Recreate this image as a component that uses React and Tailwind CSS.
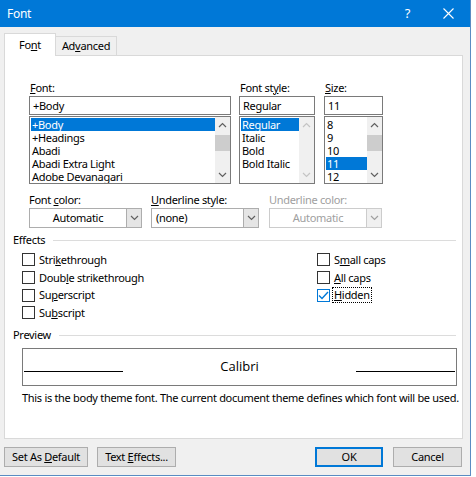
import React from 'react';

// Word "Font" dialog, Windows 10 look

const Chevron = ({ dir = 'down', color = '#606060' }) => (
  <svg width="9" height="6" viewBox="0 0 9 6">
    <polyline
      points={dir === 'down' ? '1,1 4.5,4.5 8,1' : '1,5 4.5,1.5 8,5'}
      fill="none"
      stroke={color}
      strokeWidth="1.2"
    />
  </svg>
);

function ListBox({ items, selected, width, thumb, disabled }) {
  return (
    <div
      className="mt-[1px] h-[68px] border border-[#7a7a7a] bg-white flex"
      style={{ width }}
    >
      <div className="flex-1 pt-[1px] pl-[1px] overflow-hidden">
        {items.map((it) => (
          <div
            key={it}
            className={`h-[13px] leading-[13px] pl-[1px] whitespace-nowrap ${
              it === selected ? 'bg-[#0078d7] text-white' : 'text-black'
            }`}
          >
            {it}
          </div>
        ))}
      </div>
      <div className="w-[15px] bg-[#f0f0f0] flex flex-col items-center justify-between py-[5px]">
        <Chevron dir="up" color={disabled ? '#c4c4c4' : '#606060'} />
        {thumb ? <div className="w-[15px] h-[16px] bg-[#cdcdcd] -mt-[14px]" /> : <div />}
        <Chevron dir="down" color={disabled ? '#c4c4c4' : '#606060'} />
      </div>
    </div>
  );
}

function Field({ children, width }) {
  return (
    <div
      className="h-[19px] border border-[#7a7a7a] bg-white pl-[3px] leading-[17px]"
      style={{ width }}
    >
      {children}
    </div>
  );
}

function Combo({ value, width, center, disabled }) {
  return (
    <div
      className={`h-[20px] border flex ${
        disabled ? 'border-[#cccccc] text-[#a0a0a0]' : 'border-[#adadad] text-black'
      } bg-white`}
      style={{ width }}
    >
      <div className={`flex-1 leading-[18px] ${center ? 'text-center' : 'pl-[4px]'}`}>{value}</div>
      <div
        className={`w-[15px] flex items-center justify-center border-l ${
          disabled ? 'border-[#cccccc] bg-[#f0f0f0]' : 'border-[#adadad] bg-[#e5e5e5]'
        }`}
      >
        <Chevron color={disabled ? '#a0a0a0' : '#606060'} />
      </div>
    </div>
  );
}

function Check({ label, checked }) {
  return (
    <div className="h-[17.7px] flex items-center">
      <div
        className={`w-[13px] h-[13px] border bg-white flex items-center justify-center ${
          checked ? 'border-[#0078d7]' : 'border-[#333333]'
        }`}
      >
        {checked && (
          <svg width="11" height="9" viewBox="0 0 11 9">
            <polyline points="1,4.5 4,7.5 10,1" fill="none" stroke="#0078d7" strokeWidth="1.4" />
          </svg>
        )}
      </div>
      <span
        className={`ml-[3px] leading-[14px] px-[1px] ${
          checked ? 'outline outline-1 outline-dotted outline-black' : ''
        }`}
      >
        {label}
      </span>
    </div>
  );
}

function GroupLabel({ children }) {
  return (
    <div className="flex items-center pl-[8px] pr-[6px] h-[15px]">
      <span className="text-black">{children}</span>
      <div className="flex-1 h-px bg-[#dcdcdc] ml-[8px]" />
    </div>
  );
}

function Button({ children, width, primary }) {
  return (
    <div
      className={`h-[20px] flex items-center justify-center bg-[#e1e1e1] ${
        primary ? 'border-2 border-[#0078d7]' : 'border border-[#adadad]'
      }`}
      style={{ width }}
    >
      <span>{children}</span>
    </div>
  );
}

export default function App() {
  return (
    <div className="w-[476px] h-[477px] bg-white font-['Noto_Sans',sans-serif] text-[11px] tracking-[-0.3px] text-black">
      <div className="w-[471px] h-[476px] bg-[#f0f0f0] border-r border-b border-[#5a8cc2] flex flex-col">
        {/* Title bar */}
        <div className="h-[27px] bg-[#0078d7] flex items-center text-white shrink-0">
          <span className="pl-[7px] text-[12px]">Font</span>
          <span className="ml-auto mr-[33px] text-[13px]">?</span>
          <svg width="11" height="11" viewBox="0 0 11 11" className="mr-[16px]">
            <path d="M0.5 0.5 L10.5 10.5 M10.5 0.5 L0.5 10.5" stroke="white" strokeWidth="1.1" />
          </svg>
        </div>

        {/* Tabs */}
        <div className="flex items-end pl-[4px] pt-[6px] h-[28px] shrink-0">
          <div className="w-[52px] h-[23px] bg-white border border-b-0 border-[#d9d9d9] flex items-center justify-center relative z-10 -mb-px">
            <span>
              Fo<u>n</u>t
            </span>
          </div>
          <div className="w-[61px] h-[19px] bg-[#f0f0f0] border border-l-0 border-b-0 border-[#d9d9d9] flex items-center justify-center">
            <span>
              Ad<u>v</u>anced
            </span>
          </div>
        </div>

        {/* Panel */}
        <div className="ml-[4px] w-[459px] h-[384px] bg-white border border-[#d9d9d9] shrink-0 flex flex-col">
          {/* Font / style / size */}
          <div className="flex pl-[24px] pt-[24px]">
            <div className="flex flex-col">
              <div className="h-[16px] leading-[15px] pl-[1px]">
                <u>F</u>ont:
              </div>
              <Field width={202}>+Body</Field>
              <ListBox
                width={202}
                items={['+Body', '+Headings', 'Abadi', 'Abadi Extra Light', 'Adobe Devanagari']}
                selected="+Body"
                thumb
              />
            </div>
            <div className="flex flex-col ml-[8px]">
              <div className="h-[16px] leading-[15px] pl-[1px]">
                Font st<u>y</u>le:
              </div>
              <Field width={76}>Regular</Field>
              <ListBox
                width={76}
                items={['Regular', 'Italic', 'Bold', 'Bold Italic']}
                selected="Regular"
                disabled
              />
            </div>
            <div className="flex flex-col ml-[9px]">
              <div className="h-[16px] leading-[15px] pl-[1px]">
                <u>S</u>ize:
              </div>
              <Field width={59}>11</Field>
              <ListBox width={59} items={['8', '9', '10', '11', '12']} selected="11" thumb />
            </div>
          </div>

          {/* Colour / underline */}
          <div className="flex pl-[24px] mt-[8px]">
            <div className="flex flex-col">
              <div className="h-[16px] leading-[15px]">
                Font <u>c</u>olor:
              </div>
              <Combo value="Automatic" width={113} center />
            </div>
            <div className="flex flex-col ml-[9px]">
              <div className="h-[16px] leading-[15px]">
                <u>U</u>nderline style:
              </div>
              <Combo value="(none)" width={108} />
            </div>
            <div className="flex flex-col ml-[10px]">
              <div className="h-[16px] leading-[15px] text-[#a0a0a0]">Underline color:</div>
              <Combo value="Automatic" width={113} center disabled />
            </div>
          </div>

          {/* Effects */}
          <div className="mt-[5px]">
            <GroupLabel>Effects</GroupLabel>
          </div>
          <div className="flex pl-[17px] mt-[3px]">
            <div className="flex flex-col w-[295px]">
              <Check label={<>Stri<u>k</u>ethrough</>} />
              <Check label={<>Doub<u>l</u>e strikethrough</>} />
              <Check label={<>Su<u>p</u>erscript</>} />
              <Check label={<>Su<u>b</u>script</>} />
            </div>
            <div className="flex flex-col">
              <Check label={<>S<u>m</u>all caps</>} />
              <Check label={<><u>A</u>ll caps</>} />
              <Check label={<><u>H</u>idden</>} checked />
            </div>
          </div>

          {/* Preview */}
          <div className="mt-[6px]">
            <GroupLabel>Preview</GroupLabel>
          </div>
          <div className="ml-[17px] mt-[5px] w-[435px] h-[38px] border border-[#7a7a7a] flex items-center px-[1px]">
            <div className="w-[99px] h-px bg-black mt-[10px]" />
            <div className="flex-1 text-center text-[13px] tracking-normal font-['Open_Sans',sans-serif]">
              Calibri
            </div>
            <div className="w-[99px] h-px bg-black mt-[10px]" />
          </div>
          <div className="pl-[17px] mt-[4px] whitespace-nowrap">
            This is the body theme font. The current document theme defines which font will be used.
          </div>
        </div>

        {/* Buttons */}
        <div className="flex items-center pl-[4px] mt-[8px]">
          <Button width={84}>
            Set As <u>D</u>efault
          </Button>
          <div className="ml-[9px]">
            <Button width={79}>
              Text <u>E</u>ffects...
            </Button>
          </div>
          <div className="ml-auto flex">
            <Button width={68} primary>
              OK
            </Button>
            <div className="ml-[10px] mr-[8px]">
              <Button width={69}>Cancel</Button>
            </div>
          </div>
        </div>
      </div>
    </div>
  );
}
